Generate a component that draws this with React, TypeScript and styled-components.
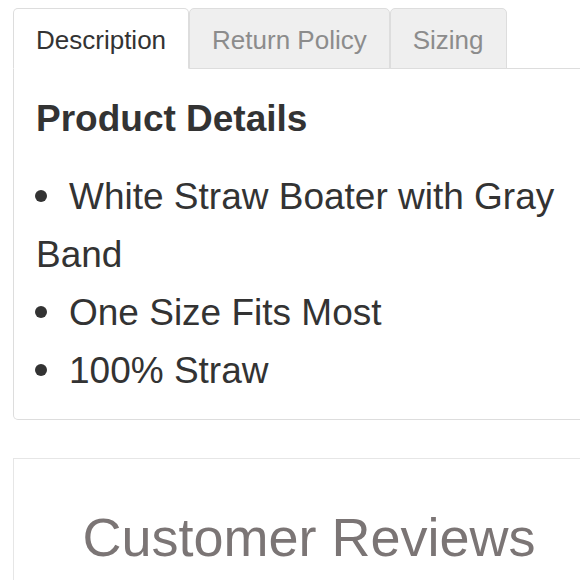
import React from "react";
import styled, { createGlobalStyle } from "styled-components";

const Global = createGlobalStyle`
  html, body {
    margin: 0;
    padding: 0;
    background: #ffffff;
    overflow: hidden;
  }
  body {
    font-family: "Liberation Sans", Arial, Helvetica, sans-serif;
    color: #333333;
  }
  * { box-sizing: border-box; }
`;

const Page = styled.div`
  width: 605px;
  height: 580px;
  overflow: hidden;
  padding: 8px 0 0 13px;
  display: flex;
  flex-direction: column;
`;

const TabsBox = styled.section`
  display: flex;
  flex-direction: column;
`;

const TabList = styled.ul`
  display: flex;
  list-style: none;
  margin: 0;
  padding: 0;
  border-bottom: 1px solid #dddddd;
`;

const Tab = styled.li<{ $active?: boolean }>`
  height: 61px;
  margin-bottom: -1px;
  padding: 3px 22px 0;
  line-height: 56px;
  font-size: 26px;
  white-space: nowrap;
  border: 1px solid #dddddd;
  border-bottom-color: ${(p) => (p.$active ? "transparent" : "#dddddd")};
  border-radius: 5px 5px 0 0;
  background: ${(p) => (p.$active ? "#ffffff" : "#efefef")};
  color: ${(p) => (p.$active ? "#333333" : "#8c8c8c")};
`;

const Panel = styled.div`
  border: 1px solid #dddddd;
  border-top: none;
  border-radius: 0 0 5px 5px;
  padding: 30px 22px 19px;
`;

const Heading = styled.h4`
  margin: 0 0 28px;
  font-size: 37px;
  line-height: 1.1;
  font-weight: 700;
  color: #333333;
`;

const Bullets = styled.ul`
  list-style: none;
  margin: 0;
  padding: 0;
`;

const Bullet = styled.li`
  font-size: 37px;
  line-height: 58px;
  color: #333333;

  &::before {
    content: "";
    display: inline-block;
    width: 12px;
    height: 12px;
    border-radius: 50%;
    background: #333333;
    margin: 0 22px 0 -1px;
    vertical-align: 7px;
  }
`;

const ReviewsCard = styled.section`
  margin-top: 38px;
  border: 1px solid #e6e6e6;
  padding-top: 49px;
  flex: 0 0 auto;
  min-height: 240px;
`;

const ReviewsTitle = styled.h2`
  margin: 0;
  text-align: center;
  font-size: 54px;
  line-height: 1.1;
  font-weight: 400;
  color: #7b7575;
`;

export default function App() {
  const tabs = ["Description", "Return Policy", "Sizing"];
  const items = ["White Straw Boater with Gray Band", "One Size Fits Most", "100% Straw"];
  return (
    <>
      <Global />
      <Page>
        <TabsBox>
          <TabList>
            {tabs.map((t, i) => (
              <Tab key={t} $active={i === 0}>
                {t}
              </Tab>
            ))}
          </TabList>
          <Panel>
            <Heading>Product Details</Heading>
            <Bullets>
              {items.map((it) => (
                <Bullet key={it}>{it}</Bullet>
              ))}
            </Bullets>
          </Panel>
        </TabsBox>
        <ReviewsCard>
          <ReviewsTitle>Customer Reviews</ReviewsTitle>
        </ReviewsCard>
      </Page>
    </>
  );
}
